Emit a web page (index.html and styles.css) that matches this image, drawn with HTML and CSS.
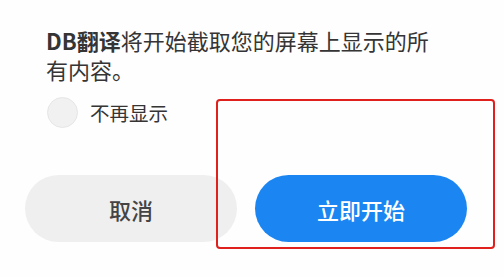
FILE: index.html
```html
<!DOCTYPE html>
<html lang="zh">
<head>
<meta charset="utf-8">
<link rel="stylesheet" href="styles.css">
</head>
<body>
<div class="dialog">
  <p class="message"><b>DB翻译</b>将开始截取您的屏幕上显示的所有内容。</p>
  <label class="check-row">
    <span class="check"></span>
    <span class="check-label">不再显示</span>
  </label>
  <div class="actions">
    <button class="btn btn-cancel">取消</button>
    <button class="btn btn-primary">立即开始</button>
  </div>
  <div class="highlight"></div>
</div>
</body>
</html>
```
FILE: styles.css
```css
html, body {
  margin: 0;
  padding: 0;
  background: #fefefe;
}
.dialog {
  position: relative;
  width: 504px;
  height: 277px;
  font-family: "Noto Sans CJK SC", "Noto Sans", sans-serif;
  color: #353535;
}
.message {
  margin: 0;
  padding: 26px 72px 0 46px;
  font-size: 22px;
  line-height: 29px;
}
.message b {
  font-weight: 700;
}
.check-row {
  display: flex;
  align-items: center;
  gap: 12px;
  margin: 13px 0 0 47px;
  height: 31px;
}
.check {
  width: 29px;
  height: 29px;
  border-radius: 50%;
  background: #f1f1f1;
  border: 1px solid #e6e6e6;
}
.check-label {
  font-size: 19.5px;
  color: #353535;
}
.actions {
  display: flex;
  gap: 18px;
  margin: 47px 0 0 25px;
}
.btn {
  width: 212px;
  height: 67px;
  border: none;
  border-radius: 34px;
  font-family: inherit;
  font-size: 22px;
  font-weight: 500;
  padding: 0;
}
.btn-cancel {
  background: #efefef;
  color: #444;
}
.btn-primary {
  background: #1b86f2;
  color: #fff;
}
.highlight {
  position: absolute;
  left: 216px;
  top: 99px;
  width: 275px;
  height: 146px;
  border: 2px solid #e0201c;
  border-radius: 4px;
}
```
